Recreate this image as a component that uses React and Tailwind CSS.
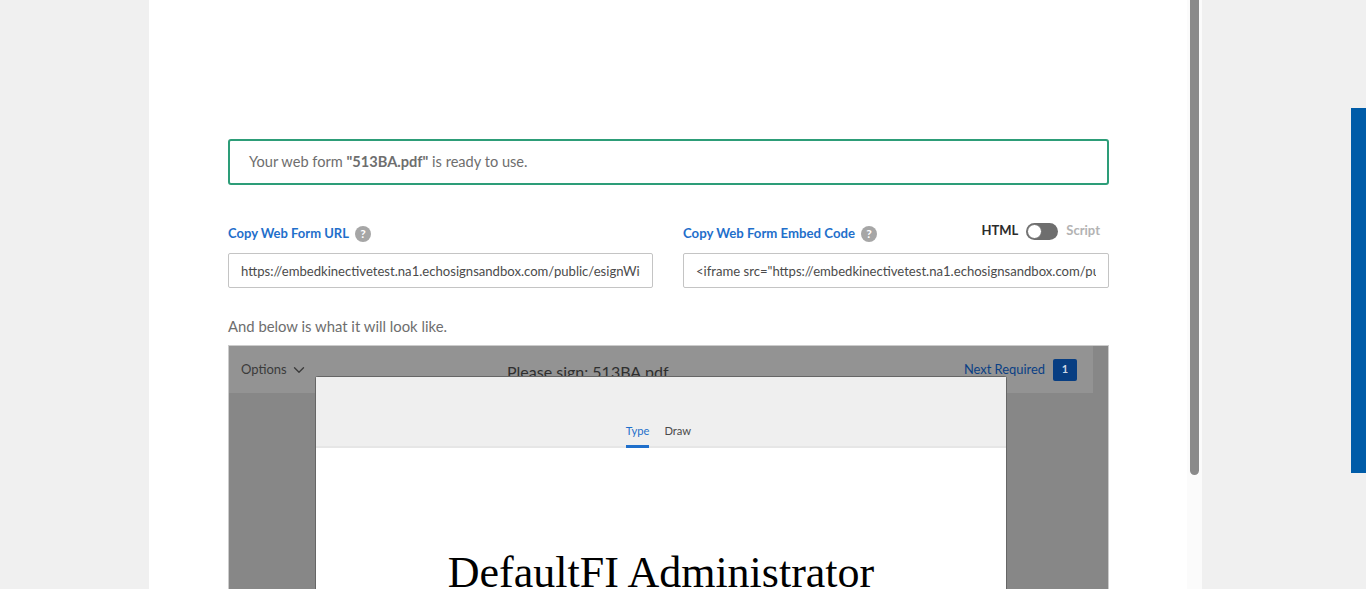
import React from 'react';
import { ChevronDown } from 'lucide-react';

const font = "[font-family:Lato,'Open_Sans',sans-serif]";

// HelpIcon component
const HelpIcon = () => (
  <span className="ml-[6px] flex h-4 w-4 items-center justify-center rounded-full bg-[#a6a6a6] text-[12px] font-bold leading-none text-white">
    ?
  </span>
);

// UrlField component
const UrlField = ({ value }) => (
  <input
    readOnly
    value={value}
    className="block h-[35px] w-full rounded-[2px] border border-[#c4c4c4] bg-white px-3 text-[13.1px] text-[#4b4b4b] outline-none"
  />
);

export default function App() {
  return (
    <div className={`relative flex h-[589px] w-[1366px] overflow-hidden bg-[#f0f0f0] ${font}`}>
      <div className="ml-[149px] flex h-full w-[1038px] flex-col bg-white pl-[79px] pr-[78px] pt-[139px]">
        {/* Success message */}
        <div className="flex h-[46px] items-center rounded-[3px] border-2 border-[#2d9d78] pl-[19px] text-[14.6px] text-[#6e6e6e]">
          <span>
            Your web form <b className="font-bold text-[#6e6e6e]">"513BA.pdf"</b> is ready to use.
          </span>
        </div>

        {/* Copy fields */}
        <div className="mt-[37px] grid grid-cols-[425px_426px] gap-x-[30px]">
          <div>
            <div className="flex h-[24px] items-center text-[13px] font-bold text-[#1f6fcb]">
              Copy Web Form URL
              <HelpIcon />
            </div>
            <div className="mt-[7px]">
              <UrlField value="https://embedkinectivetest.na1.echosignsandbox.com/public/esignWidget?wid=CBFCIBAA3" />
            </div>
          </div>
          <div>
            <div className="flex h-[24px] items-center text-[13.2px] font-bold text-[#1f6fcb]">
              Copy Web Form Embed Code
              <HelpIcon />
              <div className="ml-auto mr-[9px] flex -translate-y-[3px] items-center text-[13px]">
                <span className="text-[#2c2c2c]">HTML</span>
                <span className="ml-2 flex h-[17px] w-[32px] items-center rounded-full bg-[#6e6e6e]">
                  <span className="h-[15px] w-[15px] translate-x-[1px] rounded-full border border-[#6e6e6e] bg-white" />
                </span>
                <span className="ml-2 text-[#b3b3b3]">Script</span>
              </div>
            </div>
            <div className="mt-[7px]">
              <UrlField value={'<iframe src="https://embedkinectivetest.na1.echosignsandbox.com/public/esignWidget'} />
            </div>
          </div>
        </div>

        <p className="mt-[28px] h-[20px] text-[14.85px] leading-[20px] text-[#6e6e6e]">And below is what it will look like.</p>

        {/* Web form preview */}
        <div className="relative mt-[9px] flex-1 overflow-hidden border border-b-0 border-[#cccccc] bg-[#878787]">
          <div className="mr-[15px] grid h-[47px] grid-cols-[266px_1fr_auto] items-center bg-[#939393] pl-3 pr-4 text-[13px]">
            <div className="flex items-center text-[#3b3b3b]">
              Options
              <ChevronDown className="ml-[3px] h-[18px] w-[18px]" strokeWidth={1.8} />
            </div>
            <div className="translate-y-[2px] whitespace-nowrap text-[16px] text-[#2f2f2f]">Please sign: 513BA.pdf</div>
            <div className="flex items-center justify-end text-[12.9px] text-[#0a3f85]">
              Next Required
              <span className="ml-2 flex h-[22px] w-6 items-center justify-center rounded-[2px] bg-[#083e82] text-[11px] font-bold text-[#d0d8e4]">1</span>
            </div>
          </div>

          {/* Signature dialog over the form */}
          <div className="absolute left-[86px] top-[30px] h-[300px] w-[692px] rounded-t-[3px] border border-b-0 border-[#666666] bg-white">
            <div className="flex h-[71px] items-end justify-center gap-[15px] border-b-2 border-[#e6e6e6] bg-[#efefef] pr-[5px] text-[11.2px]">
              <span className="-mb-[2px] flex h-[25px] items-start border-b-[3px] border-[#1f6fcb] text-[#1f6fcb]">Type</span>
              <span className="-mb-[2px] flex h-[25px] items-start text-[#4b4b4b]">Draw</span>
            </div>
            <div className="mt-[98px] text-center font-['Liberation_Serif',serif] text-[44px] leading-[54px] text-black">
              DefaultFI Administrator
            </div>
          </div>
        </div>
      </div>

      {/* Scrollbar */}
      <div className="h-full w-[15px] bg-[#fbfbfb] pl-[3px]">
        <div className="h-[475px] w-[9px] rounded-b-[5px] bg-[#8a8a8a]" />
      </div>

      {/* Side tab */}
      <div className="absolute right-0 top-[108px] h-[365px] w-[15px] bg-[#005ca8]" />
    </div>
  );
}
